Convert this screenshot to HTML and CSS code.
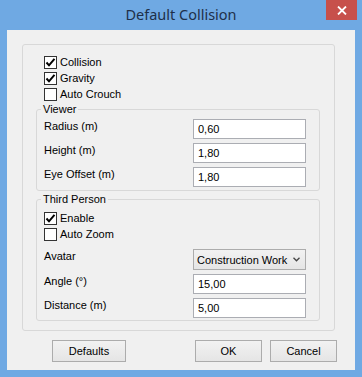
FILE: index.html
```html
<!DOCTYPE html>
<html lang="en">
<head>
    <meta charset="UTF-8">
    <meta name="viewport" content="width=device-width, initial-scale=1.0">
    <title>Default Collision</title>
    <link rel="stylesheet" href="styles.css">
</head>
<body>
    <div class="window">
        <div class="titlebar">
            <span></span>
            <h1 class="title">Default Collision</h1>
            <button class="close" aria-label="Close">
                <svg width="10" height="9" viewBox="0 0 10 9"><path d="M1 0.5 L9 8.5 M9 0.5 L1 8.5" stroke="#fff" stroke-width="1.8" fill="none"/></svg>
            </button>
        </div>

        <div class="client">
            <div class="group">
                <div class="checks top-checks">
                    <label class="check"><span class="box"><svg width="11" height="11" viewBox="0 0 11 11"><path d="M1.5 5.5 L4 8.3 L9.5 1.8" stroke="#000" stroke-width="2" fill="none"/></svg></span>Collision</label>
                    <label class="check"><span class="box"><svg width="11" height="11" viewBox="0 0 11 11"><path d="M1.5 5.5 L4 8.3 L9.5 1.8" stroke="#000" stroke-width="2" fill="none"/></svg></span>Gravity</label>
                    <label class="check"><span class="box"></span>Auto Crouch</label>
                </div>

                <fieldset class="section viewer">
                    <legend>Viewer</legend>
                    <div class="fields">
                        <span class="label">Radius (m)</span>
                        <input class="text" type="text" value="0,60">
                        <span class="label">Height (m)</span>
                        <input class="text" type="text" value="1,80">
                        <span class="label">Eye Offset (m)</span>
                        <input class="text" type="text" value="1,80">
                    </div>
                </fieldset>

                <fieldset class="section third">
                    <legend>Third Person</legend>
                    <div class="checks">
                        <label class="check"><span class="box"><svg width="11" height="11" viewBox="0 0 11 11"><path d="M1.5 5.5 L4 8.3 L9.5 1.8" stroke="#000" stroke-width="2" fill="none"/></svg></span>Enable</label>
                        <label class="check"><span class="box"></span>Auto Zoom</label>
                    </div>
                    <div class="fields">
                        <span class="label">Avatar</span>
                        <div class="combo">
                            <span>Construction Work</span>
                            <svg width="7" height="5" viewBox="0 0 7 5"><path d="M0.5 0.8 L3.5 3.8 L6.5 0.8" stroke="#444" stroke-width="1.3" fill="none"/></svg>
                        </div>
                        <span class="label">Angle (°)</span>
                        <input class="text" type="text" value="15,00">
                        <span class="label">Distance (m)</span>
                        <input class="text" type="text" value="5,00">
                    </div>
                </fieldset>
            </div>

            <div class="buttons">
                <button class="btn defaults">Defaults</button>
                <button class="btn ok">OK</button>
                <button class="btn cancel">Cancel</button>
            </div>
        </div>
    </div>
</body>
</html>
```

FILE: styles.css
```css
* {
    margin: 0;
    padding: 0;
    box-sizing: border-box;
}

body {
    background: #6fa9e3;
    font-family: 'Liberation Sans', Arial, sans-serif;
    font-size: 11px;
    color: #000;
}

.window {
    width: 362px;
    height: 377px;
    display: flex;
    flex-direction: column;
}

.titlebar {
    height: 30px;
    display: grid;
    grid-template-columns: 1fr auto 1fr;
}

.title {
    font-family: 'Noto Sans', sans-serif;
    font-size: 14.5px;
    font-weight: 400;
    line-height: 20px;
    padding-top: 4px;
    color: #1e3049;
}

.close {
    justify-self: end;
    width: 31px;
    height: 20px;
    margin-right: 5px;
    background: #c7504b;
    border: none;
    display: flex;
    align-items: center;
    justify-content: center;
}

.client {
    flex: 1;
    margin: 0 7px 7px;
    background: #f0f0f0;
    padding: 14px 18px 0 15px;
}

.group {
    border: 1px solid #d8d8d8;
    border-radius: 3px;
    margin-right: 2px;
    padding: 10px 14px 9px 13px;
}

.top-checks {
    padding-left: 8px;
}

.check {
    height: 16px;
    display: flex;
    align-items: flex-start;
    padding-top: 1px;
    gap: 3px;
    line-height: 13px;
}

.box {
    width: 13px;
    height: 13px;
    border: 1px solid #333;
    background: #fff;
    display: flex;
    align-items: center;
    justify-content: center;
}

.section {
    border: 1px solid #d8d8d8;
    border-radius: 3px;
    padding: 3px 13px 3px 7px;
}

.section legend {
    line-height: 13px;
    padding: 0 2px;
    margin-left: -3px;
}

.third {
    margin-top: 2px;
    padding-top: 5px;
    padding-bottom: 2px;
}

.fields {
    display: grid;
    grid-template-columns: 1fr 113px;
    row-gap: 4px;
}

.third .fields {
    margin-top: 6px;
}

.label {
    align-self: start;
    padding-top: 1px;
    line-height: 13px;
}

.text {
    height: 20px;
    border: 1px solid #abadb3;
    background: #fff;
    padding: 0 4px;
    font: inherit;
    color: #000;
    outline: none;
}

.combo {
    height: 21px;
    border: 1px solid #acacac;
    background: linear-gradient(#f2f2f2, #e5e5e5);
    display: flex;
    align-items: center;
    justify-content: space-between;
    padding: 0 5px 0 3px;
}

.buttons {
    display: flex;
    margin-top: 9px;
    gap: 8px;
}

.btn {
    height: 22px;
    width: 67px;
    border: 1px solid #acacac;
    background: linear-gradient(#f2f2f2, #e5e5e5);
    font: inherit;
    color: #000;
}

.defaults {
    width: 74px;
    margin-left: 30px;
}

.ok {
    margin-left: auto;
}
```
